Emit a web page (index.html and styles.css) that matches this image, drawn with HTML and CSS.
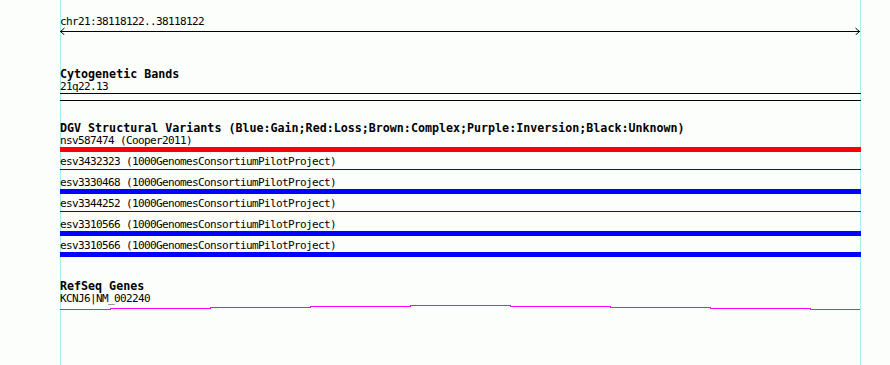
FILE: index.html
```html
<!DOCTYPE html>
<html>
<head>
<meta charset="utf-8">
<link rel="stylesheet" href="styles.css">
</head>
<body>
<div class="panel">
  <div class="ruler">
    <div class="label">chr21:38118122..38118122</div>
    <svg class="arrow" width="801" height="8" viewBox="0 0 801 8">
      <line x1="0" y1="4.5" x2="800" y2="4.5" stroke="#000" stroke-width="1" shape-rendering="crispEdges"/>
      <polyline points="4.5,1 0.5,4.5 4.5,8" fill="none" stroke="#000" stroke-width="1"/>
      <polyline points="795.5,1 799.5,4.5 795.5,8" fill="none" stroke="#000" stroke-width="1"/>
    </svg>
  </div>

  <section class="track cyto">
    <div class="track-title">Cytogenetic Bands</div>
    <div class="label">21q22.13</div>
    <div class="band-lines"></div>
  </section>

  <section class="track dgv">
    <div class="track-title">DGV Structural Variants (Blue:Gain;Red:Loss;Brown:Complex;Purple:Inversion;Black:Unknown)</div>
    <div class="feature">
      <div class="label">nsv587474 (Cooper2011)</div>
      <div class="glyph bar loss"></div>
    </div>
    <div class="feature">
      <div class="label">esv3432323 (1000GenomesConsortiumPilotProject)</div>
      <div class="glyph thin gain"></div>
    </div>
    <div class="feature">
      <div class="label">esv3330468 (1000GenomesConsortiumPilotProject)</div>
      <div class="glyph bar gain"></div>
    </div>
    <div class="feature">
      <div class="label">esv3344252 (1000GenomesConsortiumPilotProject)</div>
      <div class="glyph thin gain"></div>
    </div>
    <div class="feature">
      <div class="label">esv3310566 (1000GenomesConsortiumPilotProject)</div>
      <div class="glyph bar gain"></div>
    </div>
    <div class="feature">
      <div class="label">esv3310566 (1000GenomesConsortiumPilotProject)</div>
      <div class="glyph bar gain"></div>
    </div>
  </section>

  <section class="track refseq">
    <div class="track-title">RefSeq Genes</div>
    <div class="label">KCNJ6|NM_002240</div>
    <svg class="gene" width="801" height="7" viewBox="0 0 801 7">
      <path d="M0 5.5 H50 V4.5 H150 V3.5 H250 V2.5 H350 V1.5 H450 V2.5 H550 V3.5 H650 V4.5 H750 V5.5 H800" fill="none" stroke="#ff00ff" stroke-width="1" shape-rendering="crispEdges"/>
    </svg>
  </section>
</div>
</body>
</html>
```

FILE: styles.css
```css
html, body {
  margin: 0;
  padding: 0;
  background: #fcfefc;
  height: 365px;
  overflow: hidden;
}

.panel {
  position: relative;
  margin-left: 60px;
  width: 801px;
  height: 365px;
  padding-top: 15px;
  box-sizing: border-box;
  display: flex;
  flex-direction: column;
  font-family: "DejaVu Sans Mono", "Liberation Mono", monospace;
  color: #000;
}

.panel::before,
.panel::after {
  content: "";
  position: absolute;
  top: 0;
  bottom: 0;
  width: 1px;
  background: #a6eef0;
}

.panel::before { left: 0; }
.panel::after { right: 0; }

.ruler,
.track,
.feature {
  position: relative;
  z-index: 1;
  display: flex;
  flex-direction: column;
}

.label {
  font-size: 11px;
  letter-spacing: -0.62px;
  line-height: 13px;
  height: 12px;
  white-space: nowrap;
}

.track-title {
  font-size: 11.67px;
  font-weight: bold;
  line-height: 13px;
  height: 12px;
  white-space: nowrap;
}

.arrow,
.gene {
  display: block;
}

.cyto { margin-top: 33px; }

.band-lines {
  margin-top: 1px;
  height: 6px;
  border-top: 1px solid #000;
  border-bottom: 1px solid #000;
}

.dgv { margin-top: 21px; }

.glyph.bar {
  height: 5px;
  margin: 1px 0 3px;
}

.glyph.thin {
  height: 1px;
  margin: 2px 0 6px;
}

.loss { background: #ff0000; }
.gain { background: #0000ff; }

.refseq { margin-top: 20px; }
```
